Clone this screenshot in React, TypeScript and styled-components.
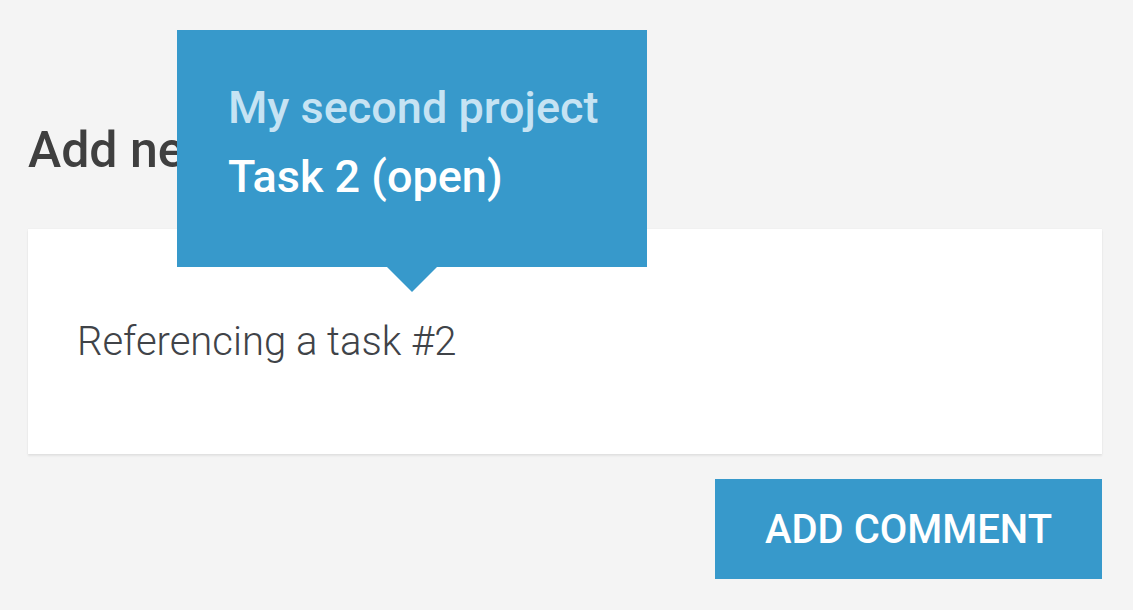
import React from 'react'
import styled, { createGlobalStyle } from 'styled-components'

const Global = createGlobalStyle`
  html, body {
    margin: 0;
    padding: 0;
    background: #f4f4f4;
    font-family: Roboto, "Liberation Sans", Arial, sans-serif;
  }
`

export default function App() {
  return <>
    <Global />
    <Page>
      <Heading>Add new comment</Heading>
      <Card>
        <Body>Referencing a task #2</Body>
      </Card>
      <Actions>
        <Button>ADD COMMENT</Button>
      </Actions>

      <Tip>
        <TipProject>My second project</TipProject>
        <TipTask>Task 2 (open)</TipTask>
      </Tip>
    </Page>
  </>
}

const Page = styled.div`
  position: relative;
  height: 610px;
  box-sizing: border-box;
  padding: 120px 31px 0 28px;
  overflow: hidden;
`
const Heading = styled.h2`
  margin: 0 0 49px;
  font-size: 50px;
  line-height: 60px;
  font-weight: 500;
  color: #3f3f3f;
`
const Card = styled.div`
  height: 225px;
  box-sizing: border-box;
  padding: 83px 49px 0;
  background: #fff;
  box-shadow: 0 2px 2px rgba(0, 0, 0, 0.07), 0 0 1px rgba(0, 0, 0, 0.08);
`
const Body = styled.div`
  font-size: 40px;
  line-height: 60px;
  font-weight: 300;
  color: #404348;
`
const Actions = styled.div`
  display: flex;
  justify-content: flex-end;
  margin-top: 25px;
`
const Button = styled.button`
  width: 387px;
  height: 100px;
  border: 0;
  background: #3799cb;
  color: #fff;
  font-family: Roboto, "Liberation Sans", Arial, sans-serif;
  font-size: 40px;
  font-weight: 500;
  cursor: pointer;
`
const Tip = styled.div`
  position: absolute;
  left: 177px;
  top: 30px;
  width: 470px;
  height: 237px;
  box-sizing: border-box;
  padding: 43px 30px 0 51px;
  background: #3799cb;
  font-size: 45px;
  line-height: 69px;
  font-weight: 500;
  white-space: nowrap;

  &::after {
    content: '';
    position: absolute;
    left: 50%;
    bottom: -25px;
    margin-left: -25px;
    border-left: 25px solid transparent;
    border-right: 25px solid transparent;
    border-top: 25px solid #3799cb;
  }
`
const TipProject = styled.div`
  color: #c6e3f3;
`
const TipTask = styled.div`
  color: #fff;
`
